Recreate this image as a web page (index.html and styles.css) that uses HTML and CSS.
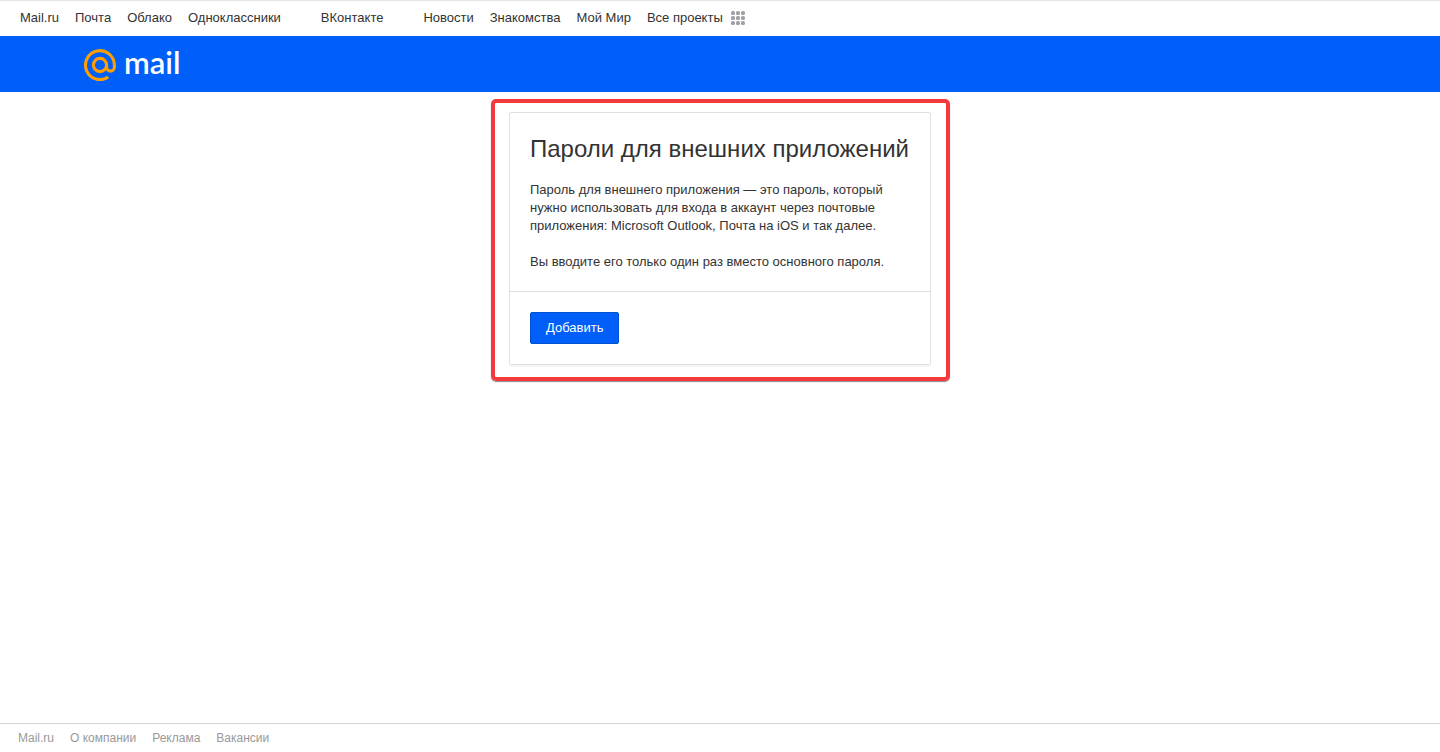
FILE: index.html
```html
<!DOCTYPE html>
<html lang="ru">
<head>
<meta charset="utf-8">
<meta name="viewport" content="width=device-width, initial-scale=1">
<title>Пароли для внешних приложений</title>
<link rel="stylesheet" href="styles.css">
</head>
<body>
<nav class="portal" aria-label="Проекты">
  <a href="#">Mail.ru</a>
  <a href="#">Почта</a>
  <a href="#">Облако</a>
  <a href="#">Одноклассники</a>
  <a class="portal-spaced" href="#">ВКонтакте</a>
  <a href="#">Новости</a>
  <a href="#">Знакомства</a>
  <a href="#">Мой Мир</a>
  <a class="portal-all" href="#">Все проекты
    <svg width="14" height="14" viewBox="0 0 14 14" fill="#a0a0a5" aria-hidden="true">
      <rect width="4" height="4" rx="1.6"/><rect x="5" width="4" height="4" rx="1.6"/><rect x="10" width="4" height="4" rx="1.6"/>
      <rect y="5" width="4" height="4" rx="1.6"/><rect x="5" y="5" width="4" height="4" rx="1.6"/><rect x="10" y="5" width="4" height="4" rx="1.6"/>
      <rect y="10" width="4" height="4" rx="1.6"/><rect x="5" y="10" width="4" height="4" rx="1.6"/><rect x="10" y="10" width="4" height="4" rx="1.6"/>
    </svg>
  </a>
</nav>
<header class="header">
  <a class="logo" href="#">
    <svg width="32" height="32" viewBox="0 0 32 32" fill="none" stroke="#ff9e00" stroke-width="3.1" aria-hidden="true">
      <circle cx="16" cy="16" r="6.6"/>
      <path d="M22.6 16V18.2a3.9 3.9 0 0 0 7.8 0V16A14.45 14.45 0 1 0 24.2 28"/>
    </svg>
    <span>mail</span>
  </a>
</header>
<main class="main">
  <div class="frame">
    <section class="card">
      <div class="card-body">
        <h1>Пароли для внешних приложений</h1>
        <p>Пароль для внешнего приложения — это пароль, который нужно использовать для входа в аккаунт через почтовые приложения: Microsoft Outlook, Почта на iOS и так далее.</p>
        <p>Вы вводите его только один раз вместо основного пароля.</p>
      </div>
      <div class="card-actions">
        <button class="button" type="button">Добавить</button>
      </div>
    </section>
  </div>
</main>
<footer class="footer">
  <a href="#">Mail.ru</a>
  <a href="#">О компании</a>
  <a href="#">Реклама</a>
  <a href="#">Вакансии</a>
</footer>
</body>
</html>
```

FILE: styles.css
```css
* {
  box-sizing: border-box;
}

body {
  display: flex;
  flex-direction: column;
  min-height: 100vh;
  margin: 0;
  background: #fff;
  color: #333;
  font: 13px/18px "Liberation Sans", Arial, sans-serif;
}

a {
  color: inherit;
  text-decoration: none;
}

.portal {
  display: flex;
  flex-wrap: wrap;
  gap: 0 16px;
  padding: 8px 20px 9px;
  border-top: 1px solid #e5e5e5;
}

.portal-spaced {
  margin: 0 24px;
}

.portal-all {
  display: flex;
  align-items: center;
  gap: 8px;
}

.header {
  display: flex;
  padding: 13px 84px 11px;
  background: #005ff9;
}

.logo {
  display: flex;
  gap: 8px;
  color: #fff;
  font: 600 31px/26px Lato, sans-serif;
}

.main {
  display: flex;
  flex: 1;
  justify-content: center;
  align-items: flex-start;
  padding: 7px 0 0 1px;
}

.frame {
  padding: 9px 15px 12px 14px;
  border: 4px solid #f43a3c;
  border-radius: 5px;
  box-shadow: 0 1px 1px #888;
}

.card {
  max-width: 422px;
  border: 1px solid #e0e0e0;
  border-radius: 2px;
  box-shadow: 0 2px 0 #f5f5f5;
}

.card-body {
  padding: 20px;
}

.card-body h1 {
  margin: 0 0 16px;
  font-size: 24px;
  font-weight: 400;
  line-height: 32px;
}

.card-body p {
  margin: 0;
}

.card-body p + p {
  margin-top: 18px;
}

.card-actions {
  padding: 20px;
  border-top: 1px solid #e0e0e0;
}

.button {
  display: block;
  height: 32px;
  padding: 0 15px;
  border: 1px solid #0051d4;
  border-radius: 2px;
  background: #005ff9;
  color: #fff;
  font: inherit;
}

.footer {
  display: flex;
  gap: 16px;
  padding: 5px 18px;
  border-top: 1px solid #d3d3d3;
  color: #999;
  font-size: 12px;
}
```
